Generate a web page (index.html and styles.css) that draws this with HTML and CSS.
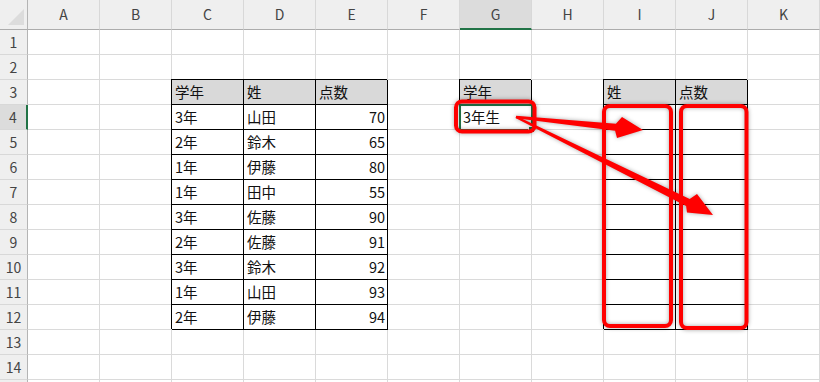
FILE: index.html
```html
<!DOCTYPE html>
<html lang="ja">
<head>
	<meta charset="utf-8">
	<title>成績表</title>
	<link rel="stylesheet" href="styles.css">
</head>
<body>
<div class="sheet">
	<div class="row head">
		<div class="rh corner">
			<svg width="27" height="29" viewBox="0 0 27 29"><polygon points="8,25 24,9 24,25" fill="#dcdcdc"/></svg>
		</div>
		<div class="c">A</div><div class="c">B</div><div class="c">C</div><div class="c">D</div>
		<div class="c">E</div><div class="c">F</div><div class="c on">G</div><div class="c">H</div>
		<div class="c">I</div><div class="c">J</div><div class="c">K</div>
	</div>

	<div class="row"><div class="rh">1</div>
		<div class="c"></div><div class="c"></div><div class="c"></div><div class="c"></div><div class="c"></div><div class="c"></div>
		<div class="c"></div><div class="c"></div><div class="c"></div><div class="c"></div><div class="c"></div>
	</div>
	<div class="row"><div class="rh">2</div>
		<div class="c"></div><div class="c"></div><div class="c"></div><div class="c"></div><div class="c"></div><div class="c"></div>
		<div class="c"></div><div class="c"></div><div class="c"></div><div class="c"></div><div class="c"></div>
	</div>
	<div class="row"><div class="rh">3</div>
		<div class="c"></div><div class="c"></div>
		<div class="c bx th">学年</div><div class="c bx th">姓</div><div class="c bx th">点数</div>
		<div class="c"></div>
		<div class="c bx th">学年</div>
		<div class="c"></div>
		<div class="c bx th">姓</div><div class="c bx th">点数</div>
		<div class="c"></div>
	</div>
	<div class="row"><div class="rh on">4</div>
		<div class="c"></div><div class="c"></div>
		<div class="c bx">3年</div><div class="c bx">山田</div><div class="c bx num">70</div>
		<div class="c"></div>
		<div class="c bx sel">3年生</div>
		<div class="c"></div>
		<div class="c bx"></div><div class="c bx"></div>
		<div class="c"></div>
	</div>
	<div class="row"><div class="rh">5</div>
		<div class="c"></div><div class="c"></div>
		<div class="c bx">2年</div><div class="c bx">鈴木</div><div class="c bx num">65</div>
		<div class="c"></div><div class="c"></div><div class="c"></div>
		<div class="c bx"></div><div class="c bx"></div>
		<div class="c"></div>
	</div>
	<div class="row"><div class="rh">6</div>
		<div class="c"></div><div class="c"></div>
		<div class="c bx">1年</div><div class="c bx">伊藤</div><div class="c bx num">80</div>
		<div class="c"></div><div class="c"></div><div class="c"></div>
		<div class="c bx"></div><div class="c bx"></div>
		<div class="c"></div>
	</div>
	<div class="row"><div class="rh">7</div>
		<div class="c"></div><div class="c"></div>
		<div class="c bx">1年</div><div class="c bx">田中</div><div class="c bx num">55</div>
		<div class="c"></div><div class="c"></div><div class="c"></div>
		<div class="c bx"></div><div class="c bx"></div>
		<div class="c"></div>
	</div>
	<div class="row"><div class="rh">8</div>
		<div class="c"></div><div class="c"></div>
		<div class="c bx">3年</div><div class="c bx">佐藤</div><div class="c bx num">90</div>
		<div class="c"></div><div class="c"></div><div class="c"></div>
		<div class="c bx"></div><div class="c bx"></div>
		<div class="c"></div>
	</div>
	<div class="row"><div class="rh">9</div>
		<div class="c"></div><div class="c"></div>
		<div class="c bx">2年</div><div class="c bx">佐藤</div><div class="c bx num">91</div>
		<div class="c"></div><div class="c"></div><div class="c"></div>
		<div class="c bx"></div><div class="c bx"></div>
		<div class="c"></div>
	</div>
	<div class="row"><div class="rh">10</div>
		<div class="c"></div><div class="c"></div>
		<div class="c bx">3年</div><div class="c bx">鈴木</div><div class="c bx num">92</div>
		<div class="c"></div><div class="c"></div><div class="c"></div>
		<div class="c bx"></div><div class="c bx"></div>
		<div class="c"></div>
	</div>
	<div class="row"><div class="rh">11</div>
		<div class="c"></div><div class="c"></div>
		<div class="c bx">1年</div><div class="c bx">山田</div><div class="c bx num">93</div>
		<div class="c"></div><div class="c"></div><div class="c"></div>
		<div class="c bx"></div><div class="c bx"></div>
		<div class="c"></div>
	</div>
	<div class="row"><div class="rh">12</div>
		<div class="c"></div><div class="c"></div>
		<div class="c bx">2年</div><div class="c bx">伊藤</div><div class="c bx num">94</div>
		<div class="c"></div><div class="c"></div><div class="c"></div>
		<div class="c bx"></div><div class="c bx"></div>
		<div class="c"></div>
	</div>
	<div class="row"><div class="rh">13</div>
		<div class="c"></div><div class="c"></div><div class="c"></div><div class="c"></div><div class="c"></div><div class="c"></div>
		<div class="c"></div><div class="c"></div><div class="c"></div><div class="c"></div><div class="c"></div>
	</div>
	<div class="row"><div class="rh">14</div>
		<div class="c"></div><div class="c"></div><div class="c"></div><div class="c"></div><div class="c"></div><div class="c"></div>
		<div class="c"></div><div class="c"></div><div class="c"></div><div class="c"></div><div class="c"></div>
	</div>
	<div class="row"><div class="rh"></div>
		<div class="c"></div><div class="c"></div><div class="c"></div><div class="c"></div><div class="c"></div><div class="c"></div>
		<div class="c"></div><div class="c"></div><div class="c"></div><div class="c"></div><div class="c"></div>
	</div>

	<!-- callouts drawn on top of the sheet -->
	<svg class="marks" width="820" height="382" viewBox="0 0 820 382">
		<g fill="none" stroke="#ff0000" stroke-width="4">
			<rect x="456" y="101.5" width="78.5" height="30" rx="6"/>
			<rect x="604" y="106" width="67" height="220" rx="6"/>
			<rect x="681" y="106" width="65.5" height="222" rx="6"/>
		</g>
		<g fill="#ff0000">
			<polygon points="516.1,115.8 615.9,123.7 622,117 643,130 617,138 615.1,130.7 515.9,118.2"/>
			<polygon points="516.5,115.9 689.7,198.9 697,194 713,215 687,212.5 686.1,206.1 515.5,118.1"/>
		</g>
	</svg>
</div>
</body>
</html>
```

FILE: styles.css
```css
body {
  margin: 0;
  overflow: hidden;
  background: #fff;
  font-family: "Noto Sans CJK JP", "Noto Sans", sans-serif;
}

.sheet {
  position: relative;
  width: 820px;
}

.row {
  display: flex;
  height: 25px;
}

/* plain cell with light gridlines */
.c {
  flex: none;
  width: 72px;
  box-sizing: border-box;
  padding: 0 3px;
  border-right: 1px solid #dadada;
  border-bottom: 1px solid #dadada;
  font-size: 14.5px;
  line-height: 24px;
  color: #111;
  white-space: nowrap;
}

/* row numbers */
.rh {
  flex: none;
  width: 28px;
  box-sizing: border-box;
  background: #efefef;
  border-right: 1px solid #b4b4b4;
  border-bottom: 1px solid #d8d8d8;
  text-align: center;
  font-size: 14px;
  line-height: 24px;
  color: #444;
}

.rh.on {
  background: #dcdcdc;
  border-right: 2px solid #217346;
}

/* column letters */
.head {
  height: 30px;
}

.head .c,
.head .rh {
  background: #efefef;
  border-bottom: 1px solid #acacac;
  line-height: 29px;
}

.head .c {
  padding: 0;
  text-align: center;
  font-size: 14px;
  color: #444;
  border-right-color: #d8d8d8;
}

.head .c.on {
  background: #dcdcdc;
  border-bottom: 2px solid #217346;
}

.corner svg {
  display: block;
}

/* cells with thin black borders */
.bx {
  border-right-color: #000;
  border-bottom-color: #000;
  box-shadow: -1px -1px 0 #000;
}

.th {
  background: #d9d9d9;
}

.num {
  text-align: right;
  padding-right: 2px;
}

/* active cell */
.sel {
  position: relative;
  z-index: 1;
  outline: 2px solid #217346;
  outline-offset: -1px;
}

.sel::after {
  content: "";
  position: absolute;
  right: -3px;
  bottom: -3px;
  width: 5px;
  height: 5px;
  background: #217346;
  border: 1px solid #fff;
  border-width: 1px 0 0 1px;
}

.marks {
  position: absolute;
  top: 0;
  left: 0;
  z-index: 2;
  filter: drop-shadow(0 0 2px rgba(0, 0, 0, 0.35));
}
```
